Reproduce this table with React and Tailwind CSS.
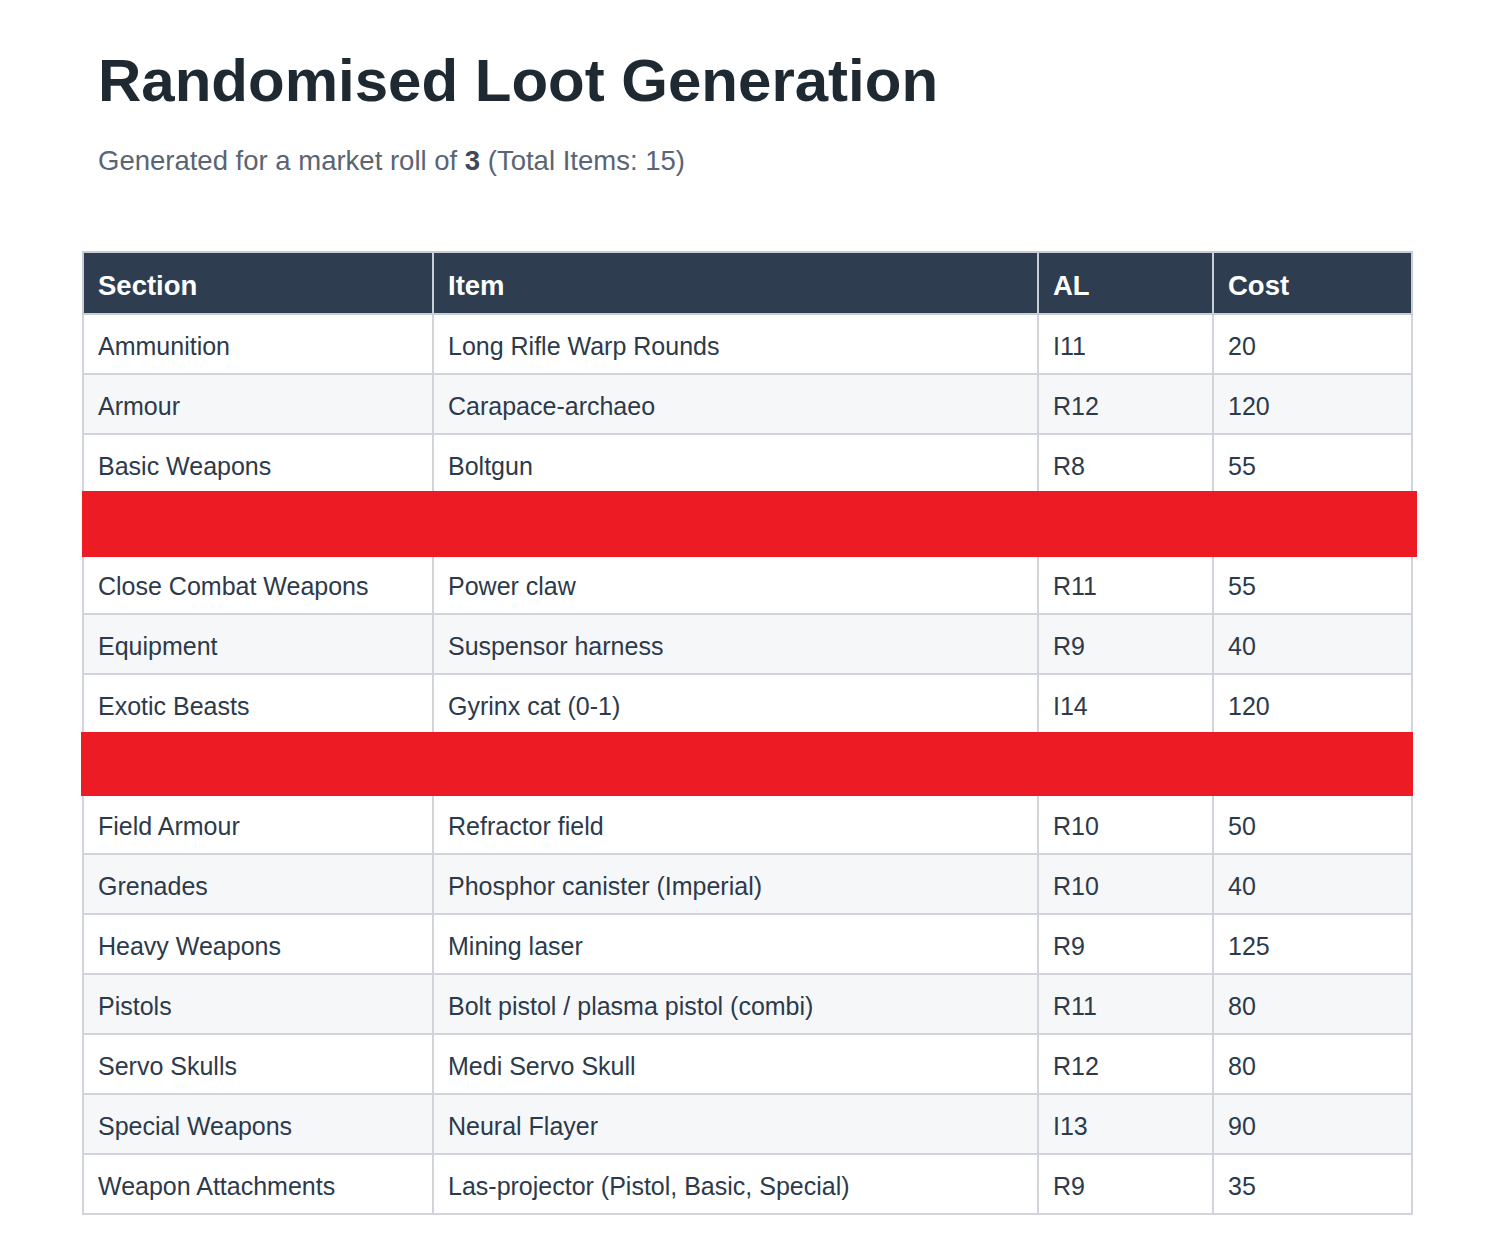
import React from "react";

const rows = [
  ["Ammunition", "Long Rifle Warp Rounds", "I11", "20"],
  ["Armour", "Carapace-archaeo", "R12", "120"],
  ["Basic Weapons", "Boltgun", "R8", "55"],
  { hidden: "-left-[2px] -right-[6px] -top-[4px] -bottom-[4px]" },
  ["Close Combat Weapons", "Power claw", "R11", "55"],
  ["Equipment", "Suspensor harness", "R9", "40"],
  ["Exotic Beasts", "Gyrinx cat (0-1)", "I14", "120"],
  { hidden: "-left-[3px] -right-[2px] -top-[3px] -bottom-[3px]" },
  ["Field Armour", "Refractor field", "R10", "50"],
  ["Grenades", "Phosphor canister (Imperial)", "R10", "40"],
  ["Heavy Weapons", "Mining laser", "R9", "125"],
  ["Pistols", "Bolt pistol / plasma pistol (combi)", "R11", "80"],
  ["Servo Skulls", "Medi Servo Skull", "R12", "80"],
  ["Special Weapons", "Neural Flayer", "I13", "90"],
  ["Weapon Attachments", "Las-projector (Pistol, Basic, Special)", "R9", "35"],
];

export default function App() {
  return (
    <div className="min-h-screen bg-white px-[82px] pt-[45px] pb-[28px] font-['Liberation_Sans',Arial,sans-serif]">
      <div className="pl-[16px]">
        <h1 className="text-[60px] leading-[72px] font-bold text-[#1e2932]">
          Randomised Loot Generation
        </h1>
        <p className="mt-[24px] text-[27.5px] leading-[40px] text-[#5a6472]">
          Generated for a market roll of <b className="text-[#3e4856]">3</b> (Total Items: 15)
        </p>
      </div>
      <table className="mt-[70px] w-[1331px] border-collapse border-2 border-[#c9ced4] text-[25px] text-[#2c3a4b]">
        <thead>
          <tr className="bg-[#2e3e50] text-white text-[27.5px] font-bold h-[62px]">
            <th className="w-[350px] border-2 border-[#c9ced4] pl-[14px] pt-[5px] text-left">Section</th>
            <th className="w-[605px] border-2 border-[#c9ced4] pl-[14px] pt-[5px] text-left">Item</th>
            <th className="w-[175px] border-2 border-[#c9ced4] pl-[14px] pt-[5px] text-left">AL</th>
            <th className="border-2 border-[#c9ced4] pl-[14px] pt-[5px] text-left">Cost</th>
          </tr>
        </thead>
        <tbody>
          {rows.map((r, index) => {
            if (r.hidden) {
              return (
                <tr key={index} className="h-[60px]">
                  <td colSpan={4} className="relative border-2 border-[#d1d5db] p-0">
                    <div className={"absolute bg-[#ed1c24] " + r.hidden}></div>
                  </td>
                </tr>
              );
            }
            return (
              <tr key={index} className={"h-[60px] " + (index % 2 === 1 ? "bg-[#f6f7f9]" : "bg-white")}>
                {r.map((c, i) => (
                  <td key={i} className="border-2 border-[#d1d5db] pl-[14px] pt-[6px]">
                    {c}
                  </td>
                ))}
              </tr>
            );
          })}
        </tbody>
      </table>
    </div>
  );
}
